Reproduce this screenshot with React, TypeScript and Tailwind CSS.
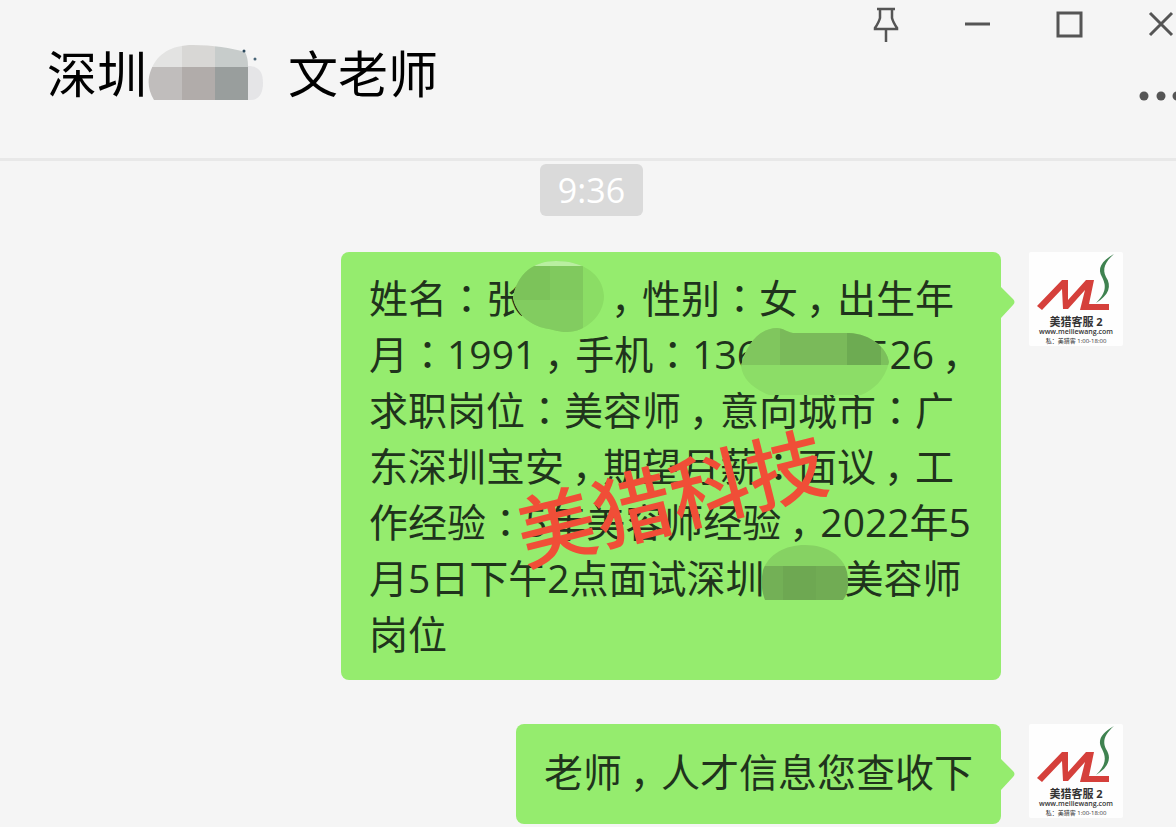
import type { ReactNode } from 'react';

const FONT = 'font-["Open_Sans","Noto_Sans_CJK_SC",sans-serif]';

function Colon() {
  return <span className='font-["Noto_Sans_CJK_JP",sans-serif] leading-none'>：</span>;
}

function Comma() {
  return <span className="inline-block w-[39px] text-right indent-2 leading-none">，</span>;
}

function NameMosaic() {
  return (
    <svg className="absolute left-0 -top-1" width="118" height="60" viewBox="0 0 118 60" aria-hidden="true">
      <clipPath id="name-mask">
        <path d="M7 56C1 46 0 36 4 26C10 10 24 1 46 1C66 1 84 4 98 8C100 12 101 16 101 22C112 22 116 28 116 39C116 49 112 56 104 56Z" />
      </clipPath>
      <g clipPath="url(#name-mask)">
        <rect width="35" height="23" fill="#e3e3e2" />
        <rect x="35" width="33" height="23" fill="#d8d7d5" />
        <rect x="68" width="33" height="23" fill="#c7cccb" />
        <rect y="23" width="35" height="35" fill="#c0bdbc" />
        <rect x="35" y="23" width="33" height="35" fill="#b1acaa" />
        <rect x="68" y="23" width="33" height="35" fill="#999e9d" />
        <rect x="101" y="20" width="17" height="38" fill="#e5e5e7" />
      </g>
      <circle cx="97" cy="7" r="1.5" fill="#2c4a5e" />
      <circle cx="108" cy="15" r="1.5" fill="#4a6678" />
    </svg>
  );
}

function GivenNameMosaic() {
  return (
    <svg className="absolute -left-3 -top-2.5" width="92" height="74" viewBox="0 0 92 74" aria-hidden="true">
      <clipPath id="given-mask">
        <path d="M0 38C4 14 20 1 43 1C70 1 90 14 91 36C91 56 72 72 54 72C46 72 42 70 36 69C20 67 4 56 0 38Z" />
      </clipPath>
      <g clipPath="url(#given-mask)">
        <rect width="92" height="74" fill="#8bdd65" />
        <rect width="70" height="6" fill="#b9efa0" />
        <rect y="6" width="37" height="34" fill="#7cc35a" />
        <rect x="37" y="6" width="33" height="34" fill="#80c95e" />
        <rect y="40" width="70" height="34" fill="#82cc60" />
      </g>
    </svg>
  );
}

function PhoneMosaic() {
  return (
    <svg className="absolute -left-[18px] top-0.5" width="148" height="72" viewBox="0 0 148 72" aria-hidden="true">
      <clipPath id="phone-mask">
        <path d="M0 38C6 14 20 0 36 0C42 0 46 4 52 5L108 5C130 6 146 20 148 34C144 52 132 62 120 67L28 67C12 60 2 52 0 38Z" />
      </clipPath>
      <g clipPath="url(#phone-mask)">
        <rect width="148" height="72" fill="#8cdd67" />
        <rect width="39" height="37" fill="#80c65e" />
        <rect x="39" width="67" height="37" fill="#7aba5a" />
        <rect x="106" width="34" height="37" fill="#6dab52" />
        <rect x="140" width="8" height="37" fill="#7cc05c" />
      </g>
    </svg>
  );
}

function ShopMosaic() {
  return (
    <svg className="absolute -left-1 -top-1.5" width="88" height="58" viewBox="0 0 88 58" aria-hidden="true">
      <clipPath id="shop-mask">
        <path d="M4 56C0 46 0 36 2 26C8 10 24 1 44 1C66 1 82 12 86 28C88 38 88 48 82 56Z" />
      </clipPath>
      <g clipPath="url(#shop-mask)">
        <rect width="88" height="22" fill="#86d263" />
        <rect y="22" width="22" height="36" fill="#73b056" />
        <rect x="22" y="22" width="33" height="36" fill="#6ea852" />
        <rect x="55" y="22" width="33" height="36" fill="#71ac54" />
      </g>
    </svg>
  );
}

function Avatar() {
  return (
    <svg className="h-[94px] w-[94px] shrink-0" viewBox="0 0 94 94" role="img" aria-label="美猎客服2">
      <rect width="94" height="94" rx="2" fill="#fefefe" />
      <path d="M8 54L33 28H39V48L57 28H65L60 52H80V58H51L56 38L39 57H34L33 37L13 58Z" fill="#d5403b" />
      <path d="M85 2C72 9 68 17 73 25C77 33 78 40 67 51C80 43 83 34 77 25C73 17 76 10 85 2Z" fill="#3f8250" />
      <g fill="#333" textAnchor="middle" className='font-["Open_Sans","Noto_Sans_CJK_SC",sans-serif]'>
        <text x="47" y="74" fontSize="11" fontWeight="700">美猎客服 2</text>
        <text x="47" y="82" fontSize="7" fontWeight="600">www.meiliewang.com</text>
        <text x="47" y="91" fontSize="6">私：美猎客 1:00-18:00</text>
      </g>
    </svg>
  );
}

function Message({ pad, children }: { pad: string; children: ReactNode }) {
  return (
    <li className="flex items-start justify-end gap-7">
      <div className={`relative rounded-lg bg-[#95ec6e] px-7 text-[39px] leading-[56px] text-[#20331c] ${pad}`}>
        {children}
        <svg className="absolute left-full top-[34px]" width="15" height="33" viewBox="0 0 15 33" aria-hidden="true">
          <path d="M-1 0L12 13Q15 16 12 19L-1 33Z" fill="#95ec6e" />
        </svg>
      </div>
      <Avatar />
    </li>
  );
}

export default function App() {
  return (
    <div className={`min-h-screen overflow-hidden bg-[#f5f5f5] ${FONT}`}>
      <header className="border-b-3 border-[#e8e8e8] pb-[50px]">
        <div className="flex h-12 items-center justify-end gap-[62px] text-[#555]">
          <button type="button" aria-label="置顶">
            <svg width="30" height="40" viewBox="0 0 30 40" fill="none" stroke="currentColor" strokeWidth="2.500">
              <path d="M7 5H25M10 5V14Q9 18 5 24V25H27V24Q23 18 22 14V5M16 25V38" />
            </svg>
          </button>
          <button type="button" aria-label="最小化">
            <svg width="30" height="30" viewBox="0 0 30 30" stroke="currentColor" strokeWidth="3">
              <path d="M3 15H28" />
            </svg>
          </button>
          <button type="button" aria-label="最大化">
            <svg width="30" height="30" viewBox="0 0 30 30" fill="none" stroke="currentColor" strokeWidth="3">
              <path d="M4 4H27V27H4Z" />
            </svg>
          </button>
          <button type="button" aria-label="关闭">
            <svg width="30" height="30" viewBox="0 0 30 30" stroke="currentColor" strokeWidth="3">
              <path d="M4 4L26 26M26 4L4 26" />
            </svg>
          </button>
        </div>
        <div className="flex h-[60px] items-start justify-between pl-[47px]">
          <h1 className="flex items-center text-[50px] leading-[52px] text-black">
            深圳
            <span className="relative h-[52px] w-[141px]">
              <NameMosaic />
            </span>
            文老师
          </h1>
          <button type="button" aria-label="更多" className="self-end text-[#555]">
            <svg width="38" height="24" viewBox="0 0 38 24" fill="currentColor">
              <circle cx="6" cy="12" r="4.500" />
              <circle cx="23" cy="12" r="4.500" />
              <circle cx="39" cy="12" r="4.500" />
            </svg>
          </button>
        </div>
      </header>

      <main className="pr-[53px] pt-[3px]">
        <div className="flex justify-center pl-[60px]">
          <time className="rounded-md bg-[#dadada] px-[18px] text-[34px] leading-[52px] text-white">9:36</time>
        </div>
        <ul className="mt-9 flex flex-col gap-11">
          <Message pad="w-[660px] py-[18px] whitespace-nowrap">
            <p className="h-14">
              姓名<Colon />张
              <span className="relative inline-block h-14 w-[78px] align-top"><GivenNameMosaic /></span>
              <Comma />性别<Colon />女<Comma />出生年
            </p>
            <p className="h-14">
              月<Colon />1991<Comma />手机<Colon />136
              <span className="relative z-10 inline-block h-14 w-[108px] align-top"><PhoneMosaic /></span>
              526<Comma />
            </p>
            <p className="h-14">求职岗位<Colon />美容师<Comma />意向城市<Colon />广</p>
            <p className="h-14">东深圳宝安<Comma />期望月薪<Colon />面议<Comma />工</p>
            <p className="h-14">作经验<Colon />5年美容师经验<Comma />2022年5</p>
            <p className="h-14">
              月5日下午2点面试深圳
              <span className="relative inline-block h-14 w-20 align-top"><ShopMosaic /></span>
              美容师
            </p>
            <p className="h-14">岗位</p>
            <span className="absolute left-[172px] top-[186px] -rotate-14 text-[79px] leading-[120px] font-medium text-[#f04e37]">
              美猎科技
            </span>
          </Message>
          <Message pad="pt-5 pb-6">
            <p className="h-14">老师<Comma />人才信息您查收下</p>
          </Message>
        </ul>
      </main>
    </div>
  );
}
